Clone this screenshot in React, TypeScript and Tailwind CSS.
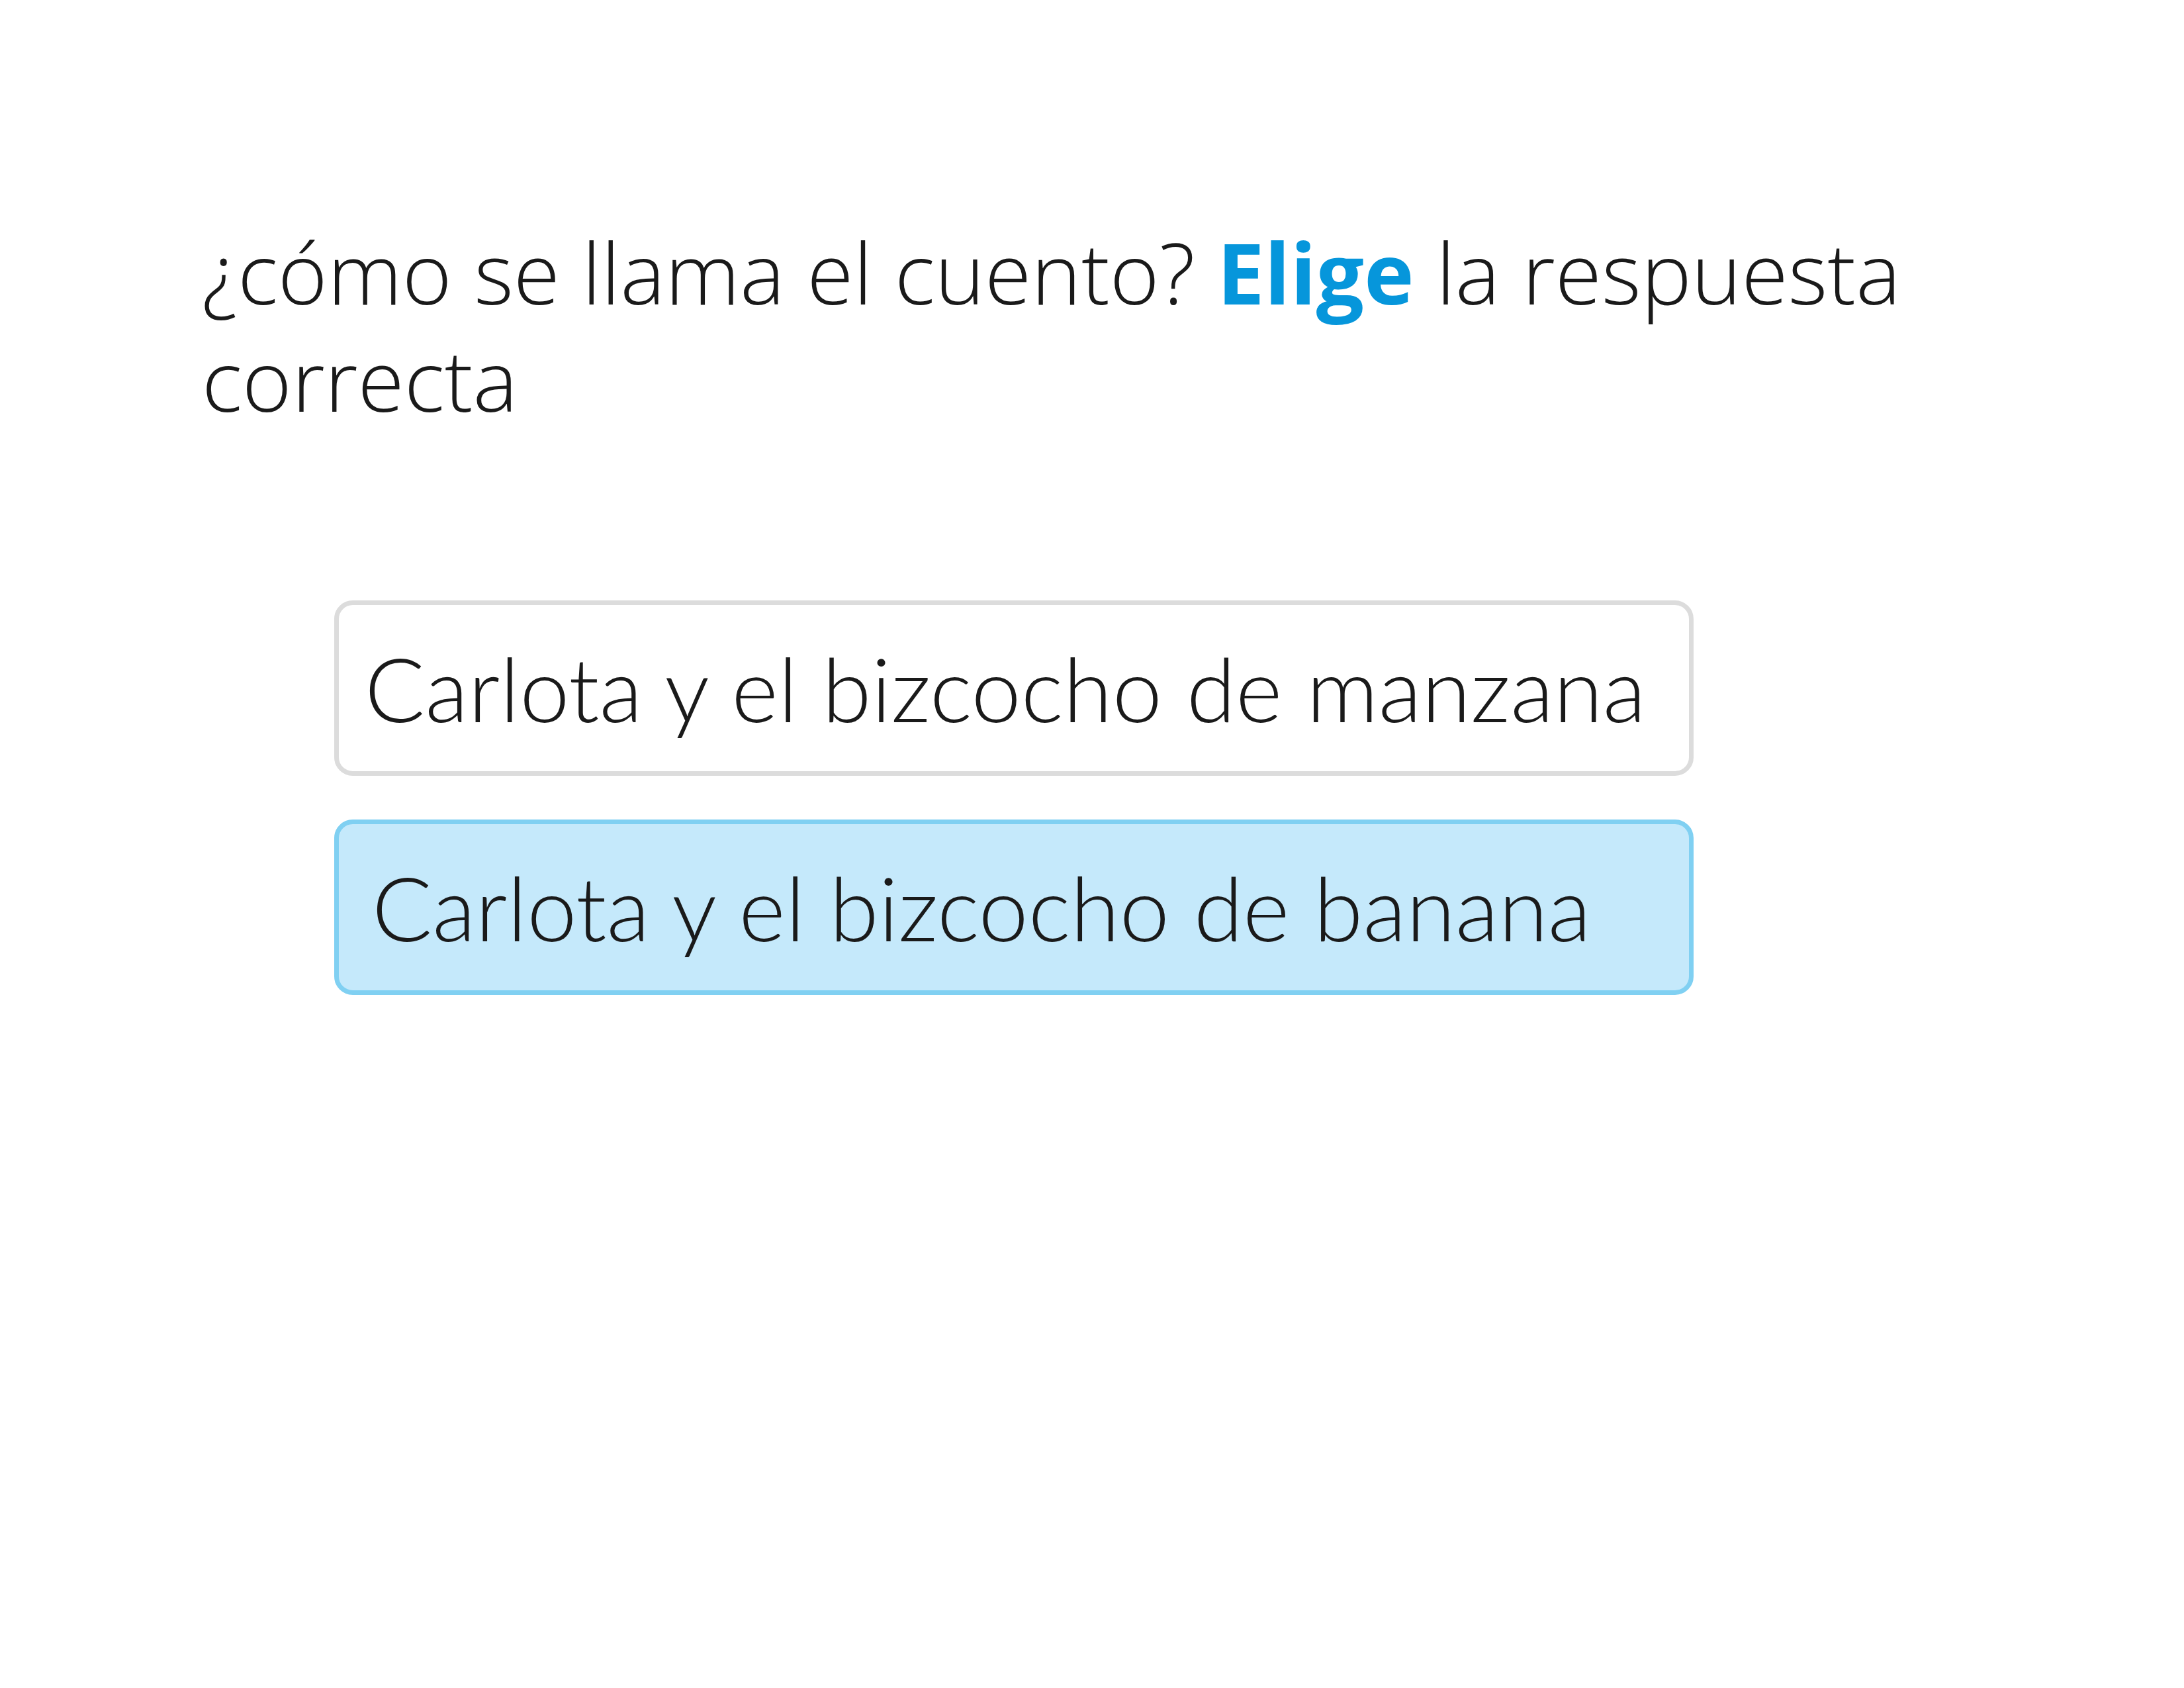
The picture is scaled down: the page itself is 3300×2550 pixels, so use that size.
const answers = [
  { label: "Carlota y el bizcocho de manzana", selected: false },
  { label: "Carlota y el bizcocho de banana", selected: true },
];

export default function App() {
  return (
    <div className="min-h-[2550px] w-[3300px] bg-white">
      <div className="pt-[330px] pl-[305px]">
        <h1 className="w-[2650px] font-['Open_Sans',sans-serif] text-[128px] leading-[162px] font-light text-[#1a1a1a]">
          ¿cómo se llama el cuento?{" "}
          <span className="font-bold text-[#0696db]">Elige</span> la respuesta
          correcta
        </h1>
      </div>

      <div className="mt-[253px] ml-[505px] flex w-[2054px] flex-col gap-[66px]">
        {answers.map((a) => (
          <div
            key={a.label}
            className={
              a.selected
                ? "flex h-[265px] items-center rounded-[28px] border-[7px] border-[#80d0f2] bg-[#c5e9fb] pl-[50px]"
                : "flex h-[265px] items-center rounded-[28px] border-[7px] border-[#dcdcdc] bg-white pl-[39px]"
            }
          >
            <span className="font-['Lato',sans-serif] text-[135px] leading-none font-light whitespace-nowrap text-[#1a1a1a]">
              {a.label}
            </span>
          </div>
        ))}
      </div>
    </div>
  );
}
